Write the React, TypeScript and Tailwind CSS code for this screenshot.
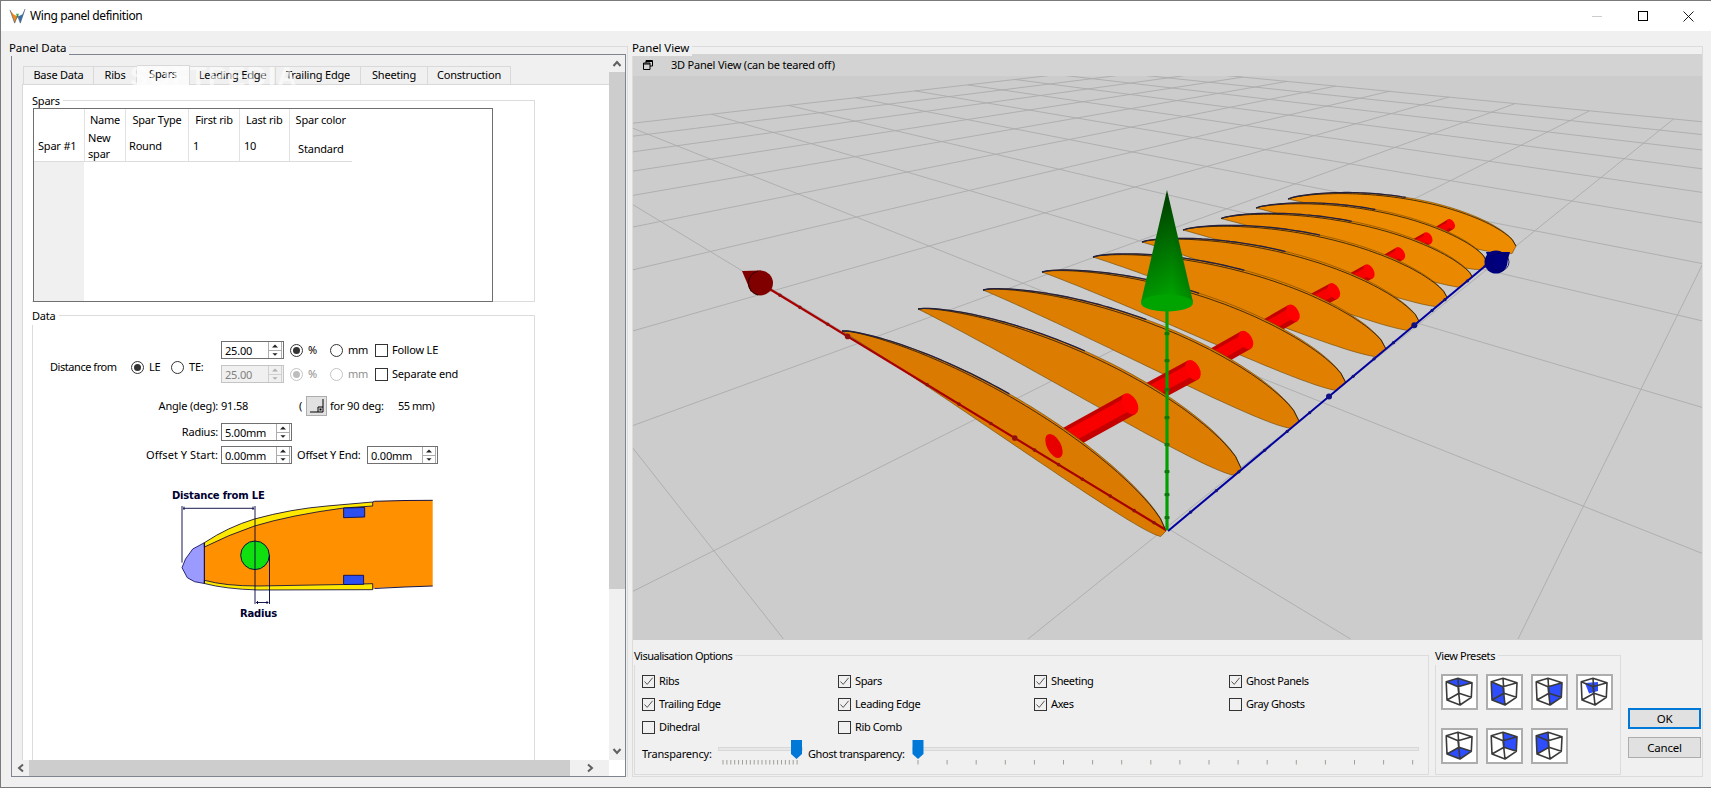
import React from "react";

const VA: [number, number] = [1840, -15];
const VB: [number, number] = [265, -18];
const aLine = (k: number): [number, number, number, number] => [VA[0], VA[1], 1028 - 490 * k, 639];
const bLine = (k: number): [number, number, number, number] => [VB[0], VB[1], 783.5 + 567 * (k - 1), 639];
function cross(p: number[], q: number[]): [number, number] {
  const [x1, y1, x2, y2] = p;
  const [x3, y3, x4, y4] = q;
  const d = (x1 - x2) * (y3 - y4) - (y1 - y2) * (x3 - x4);
  const a = x1 * y2 - y1 * x2;
  const b = x3 * y4 - y3 * x4;
  return [(a * (x3 - x4) - (x1 - x2) * b) / d, (a * (y3 - y4) - (y1 - y2) * b) / d];
}
const A_MAX = 10;
const B_MAX = 12;
const aKs = Array.from({ length: A_MAX + 2 }, (_, i) => i - 1);
const bKs = Array.from({ length: B_MAX }, (_, i) => i + 1);

const ribs: number[][] = [
  [842, 331, 1166, 531],
  [918, 309, 1241, 468],
  [983, 290, 1299, 421],
  [1042, 272, 1346, 383],
  [1093, 257, 1386, 349],
  [1142, 242, 1420, 323],
  [1183, 230, 1448, 299],
  [1221, 218.5, 1474, 280],
  [1256, 208, 1487, 262],
  [1288, 199, 1516, 246],
];
const caps: number[][] = [
  [1054, 446],
  [1130, 404],
  [1193, 370],
  [1246, 340],
  [1293, 313],
  [1334, 291],
  [1369, 271.5],
  [1400, 253.5],
  [1428, 238],
  [1451, 224],
];
const ts = Array.from({ length: 61 }, (_, i) => i / 60);
function ribData(r: number[], i: number) {
  const [tx, ty, ex, ey] = r;
  const dx = ex - tx;
  const dy = ey - ty;
  const s = Math.hypot(dx, dy) / 380;
  const sl = i === 0 ? 0.85 : s + (1 - s) * 0.4;
  const A = i === 0 ? 41 : 43;
  const up = (t: number) => -A * s * 2.67 * Math.pow(t, 0.85) * Math.pow(1 - t, 0.6);
  const lo = (t: number) => 30 * sl * Math.pow(t, 1.6) * Math.pow(1 - t, 0.25);
  const pt = (t: number, o: number) => `${(tx + t * dx).toFixed(1)},${(ty + t * dy + o).toFixed(1)}`;
  const upper = ts.map((t) => pt(t, up(t)));
  const inner = ts.map((t) => pt(t, up(t) * 0.94));
  const lower = ts.map((t) => pt(t, lo(t))).reverse();
  return {
    body: "M" + upper.concat(lower).join("L") + "Z",
    upper: "M" + upper.join("L"),
    inner: "M" + inner.join("L"),
    tip: "M" + upper.slice(0, 32).join("L"),
  };
}
function mix(i: number) {
  const f = i / 9;
  const g = Math.round(122 + f * 18);
  const r = Math.round(218 + f * 20);
  return `rgb(${r},${g},0)`;
}

function Scene() {
  const order = [9, 8, 7, 6, 5, 4, 3, 2, 1, 0];
  return (
    <svg viewBox="633 76 1069 564" width={1069} height={564} className="block">
      <defs>
        <linearGradient id="cone" x1="0" y1="0" x2="0" y2="1">
          <stop offset="0" stopColor="#003c00" />
          <stop offset="1" stopColor="#00a800" />
        </linearGradient>
        <linearGradient id="conex" x1="0" y1="0" x2="1" y2="0">
          <stop offset="0" stopColor="#000" stopOpacity="0.12" />
          <stop offset="0.6" stopColor="#000" stopOpacity="0" />
          <stop offset="1" stopColor="#000" stopOpacity="0.2" />
        </linearGradient>
        <clipPath id="aboveBlue">
          <polygon points="633,978 1702,85 1702,60 633,60" />
        </clipPath>
      </defs>
      <rect x="633" y="76" width="1069" height="564" fill="#cccccc" />
      {aKs.map((k) => {
        const l = aLine(k);
        const e = cross(l, bLine(B_MAX));
        return <line key={"a" + k} x1={e[0]} y1={e[1]} x2={l[2]} y2={l[3]} stroke="#acacac" strokeWidth="0.9" />;
      })}
      {bKs.map((k) => {
        const l = bLine(k);
        const e = cross(l, aLine(A_MAX));
        return <line key={"b" + k} x1={e[0]} y1={e[1]} x2={l[2]} y2={l[3]} stroke="#acacac" strokeWidth="0.9" />;
      })}
      {order.map((i) => {
        const d = ribData(ribs[i], i);
        const nearCap = caps[i];
        const next = i > 0 ? caps[i - 1] : null;
        const rad = 11.5 - ((i - 1) * 6) / 8;
        const ang = next ? (Math.atan2(next[1] - nearCap[1], next[0] - nearCap[0]) * 180) / Math.PI : 0;
        return (
          <g key={i}>
            <g clipPath={i > 0 && i < 9 ? "url(#aboveBlue)" : undefined}>
              <path d={d.body} fill={mix(i)} stroke="#6a4500" strokeWidth="0.6" />
              <path d={d.inner} fill="none" stroke="#1c1408" strokeWidth="0.8" />
              <path d={d.tip} fill="none" stroke="#232040" strokeWidth="1.3" />
            </g>
            {next && (
              <g>
                <line x1={nearCap[0]} y1={nearCap[1]} x2={next[0]} y2={next[1]} stroke="#c40000" strokeWidth={rad * 2} />
                <line x1={nearCap[0]} y1={nearCap[1] - rad * 0.1} x2={next[0]} y2={next[1] - rad * 0.1} stroke="#f80000" strokeWidth={rad * 1.15} />
                <ellipse
                  cx={nearCap[0]}
                  cy={nearCap[1]}
                  rx={rad * 0.62}
                  ry={rad}
                  transform={`rotate(${ang + 180} ${nearCap[0]} ${nearCap[1]})`}
                  fill="#ff0000"
                />
              </g>
            )}
            {!next && <ellipse cx="1054" cy="446" rx="7" ry="13" transform="rotate(-28 1054 446)" fill="#e80000" />}
          </g>
        );
      })}
      {/* red axis */}
      <line x1="1166" y1="530" x2="768" y2="288" stroke="#a80000" strokeWidth="2.2" />
      {[0.03, 0.08, 0.14, 0.21, 0.27, 0.33, 0.38, 0.44, 0.52, 0.6, 0.8, 0.85, 0.92, 0.97].map((f) => (
        <circle key={f} cx={1166 - 398 * f} cy={530 - 242 * f} r={f === 0.38 || f === 0.8 ? 2.8 : 1.8} fill="#901010" />
      ))}
      <polygon points="742,271 761,270.5 751,292" fill="#800000" />
      <circle cx="760.5" cy="283" r="12.5" fill="#800000" />
      <path d="M758 271 A12.3 12.3 0 0 0 758 295" fill="none" stroke="#220000" strokeWidth="0.9" />
      {/* blue axis */}
      <line x1="1168" y1="531" x2="1490" y2="262" stroke="#0000a0" strokeWidth="2" />
      {[0.07, 0.15, 0.22, 0.3, 0.37, 0.44, 0.5, 0.575, 0.64, 0.7, 0.765, 0.82, 0.86, 0.93, 0.985].map((f) => (
        <circle key={f} cx={1168 + 322 * f} cy={531 - 269 * f} r={f === 0.5 || f === 0.765 ? 3 : 1.6} fill="#101080" />
      ))}
      <polygon points="1486,252 1510,252 1506,266 1492,270" fill="#00007f" />
      <circle cx="1496" cy="262" r="11.5" fill="#00007f" />
      <circle cx="1500" cy="262" r="9" fill="none" stroke="#000050" strokeWidth="0.8" />
      {/* green axis */}
      <line x1="1167" y1="530" x2="1167" y2="305" stroke="#00a000" strokeWidth="3.2" />
      {[332, 359, 388, 416, 443, 470, 493, 516].map((y) => (
        <rect key={y} x="1164.5" y={y} width="5" height="3.2" rx="1" fill="#0a7a0a" />
      ))}
      <polygon points="1167,190 1141,302 1193,302" fill="url(#cone)" />
      <polygon points="1167,190 1141,302 1193,302" fill="url(#conex)" />
      <ellipse cx="1167" cy="303" rx="26" ry="8.5" fill="#00a400" />
    </svg>
  );
}

function Diagram() {
  return (
    <svg viewBox="165 485 275 135" width={275} height={135} className="block">
      <path d="M204.4,541.7 L192.7,548 L185.5,558 L182,566.7 L187.3,576.7 L194.5,580.7 L204.4,582.5 Z" fill="#9a9aff" stroke="#000050" strokeWidth="0.8" />
      <path d="M204.4,541.7 Q228,526 254.5,518 Q291,508 327,505 L372.7,501 L374.5,500.3 L405,499.3 L432.7,499.3 L432.7,585 L374.5,587 L372.7,588.7 L258,588 Q225,587 204.4,579.3 Z" fill="#ff9000" />
      <path d="M204.4,541.7 Q228,526 254.5,518 Q291,508 327,505 L372.7,501 L372.7,505 L343.6,507 Q291,514 254.5,525 Q228,534 204.4,546 Z" fill="#ffe800" stroke="#000040" strokeWidth="0.8" />
      <path d="M204.4,579.3 Q225,585 258,585 L343.6,583.5 L372.7,582.7 L372.7,588.7 L258,589 Q225,588 204.4,582.5 Z" fill="#ffe800" stroke="#000040" strokeWidth="0.8" />
      <path d="M372.7,501 L374.5,500.3 L405,499.5 L432.7,499.3 M432.7,585 L405,586 L374.5,587.5" fill="none" stroke="#000040" strokeWidth="0.9" />
      <path d="M204.4,541.7 L204.4,582.5" stroke="#000040" strokeWidth="0.9" />
      <path d="M343.6,507 L364.7,506.5 L364.7,516 L343.6,516.7 Z" fill="#2d4ff0" stroke="#000040" strokeWidth="0.8" />
      <path d="M343.6,574.3 L363.6,574.3 L363.6,583.3 L343.6,583.5 Z" fill="#2d4ff0" stroke="#000040" strokeWidth="0.8" />
      <circle cx="255" cy="554.3" r="14.3" fill="#10e010" stroke="#000040" strokeWidth="0.9" />
      <path d="M182,505 V561.6 M255,505 V603 M269.5,554 V603" stroke="#000040" strokeWidth="0.9" fill="none" />
      <path d="M183,507.3 H254 M184,505.6 V509 M253,505.6 V509 M256,601.5 H268.5 M257.5,600 V603 M267,600 V603" stroke="#000040" strokeWidth="0.9" fill="none" />
      <text x="172" y="498" fontFamily="'DejaVu Sans', sans-serif" fontWeight="700" fontSize="10" fill="#000030">Distance from LE</text>
      <text x="240" y="616" fontFamily="'DejaVu Sans', sans-serif" fontWeight="700" fontSize="10" fill="#000030">Radius</text>
    </svg>
  );
}

function Radio({ on, off, label, w }: { on?: boolean; off?: boolean; label: string; w: string }) {
  return (
    <div className={`flex items-center shrink-0 ${w} ${off ? "text-[#8f8f8f]" : ""}`}>
      <span className={`flex items-center justify-center w-[13px] h-[13px] rounded-full border shrink-0 ${off ? "border-[#c4c4c4]" : "border-[#333333]"}`}>
        {on && <span className={`block w-[7px] h-[7px] rounded-full ${off ? "bg-[#bdbdbd]" : "bg-[#333333]"}`} />}
      </span>
      <span className="ml-[5px]">{label}</span>
    </div>
  );
}

function Check({ on, label, className = "" }: { on?: boolean; label: string; className?: string }) {
  return (
    <div className={`flex items-center ${className}`}>
      <span className="flex items-center justify-center w-[13px] h-[13px] border border-[#333333] bg-transparent shrink-0">
        {on && (
          <svg viewBox="0 0 11 11" width={11} height={11}>
            <path d="M1.5 5.5 L4.2 8.4 L9.6 1.8" fill="none" stroke="#555555" strokeWidth="1" />
          </svg>
        )}
      </span>
      <span className="ml-[4px]">{label}</span>
    </div>
  );
}

function Spin({ value, w, off }: { value: string; w: string; off?: boolean }) {
  const a = off ? "#b0b0b0" : "#222222";
  return (
    <div className={`flex items-center shrink-0 h-[18px] ${w} border ${off ? "bg-[#f0f0f0] border-[#c4c4c4] text-[#7f7f7f]" : "bg-white border-[#707070]"}`}>
      <span className="flex-1 pl-[3px] leading-none">{value}</span>
      <span className={`flex flex-col w-[14px] h-[16px] mr-px border-l border-r ${off ? "border-[#d0d0d0]" : "border-[#adadad]"}`}>
        <svg viewBox="0 0 12 8" width={12} height={8} className="block">
          <path d="M3 5.5 H9 L6 2.5 Z" fill={a} />
        </svg>
        <svg viewBox="0 0 12 8" width={12} height={8} className={`block border-t ${off ? "border-[#d0d0d0]" : "border-[#adadad]"}`}>
          <path d="M3 2.5 H9 L6 5.5 Z" fill={a} />
        </svg>
      </span>
    </div>
  );
}

const topF = "5.2,7.7 17,4.3 31,8.7 17,12.7";
const leftF = "5.2,7.7 17,12.7 19,31 6,26";
const frontF = "17,12.7 31,8.7 30.3,23.3 19,31";
const backS = "9,9 22,8 22,17 13,19.5";
const botF = "6,26 19,31 30.3,23.3 18,19.3";
const backR = "17,4.3 31,8.7 30.3,23.3 18,19.3";
const backL = "5.2,7.7 17,4.3 18,19.3 6,26";

function Cube({ face }: { face: string }) {
  return (
    <span className="block w-[37px] h-[36px] border-2 border-[#adadad] bg-white shrink-0">
      <svg viewBox="2 2 33 32" width={33} height={32} className="block">
        <polygon points={face} fill="#2d4dff" />
        <path
          d="M5.2 7.7 L17 4.3 L31 8.7 L17 12.7 Z M6 26 L19 31 L30.3 23.3 L18 19.3 Z M5.2 7.7 L6 26 M17 12.7 L19 31 M31 8.7 L30.3 23.3 M17 4.3 L18 19.3"
          fill="none"
          stroke="#3a3a3a"
          strokeWidth="1.6"
          strokeLinejoin="round"
        />
      </svg>
    </span>
  );
}

function Slider({ w, thumb, start, step, count, trackFrom }: { w: number; thumb: number; start: number; step: number; count: number; trackFrom: number }) {
  const ticks = Array.from({ length: count }, (_, i) => start + i * step);
  return (
    <div className="relative shrink-0 h-[25px]" style={{ width: w }}>
      <div className="absolute top-[7px] right-0 h-[4px] bg-[#e7e7e7] border border-[#d8d8d8]" style={{ left: trackFrom }} />
      <svg viewBox={`0 0 ${w} 25`} width={w} height={25} className="absolute left-0 top-0">
        {ticks.map((x) => (
          <line key={x} x1={x} x2={x} y1="20" y2="24.5" stroke="#a09f94" strokeWidth="1" />
        ))}
        <polygon points={`${thumb - 5.5},0 ${thumb + 5.5},0 ${thumb + 5.5},14 ${thumb},19 ${thumb - 5.5},14`} fill="#0078d7" />
      </svg>
    </div>
  );
}

function Chev({ d }: { d: string }) {
  return (
    <svg viewBox="0 0 10 10" width={10} height={10} className="block">
      <path d={d} fill="none" stroke="#606060" strokeWidth="2" />
    </svg>
  );
}

const cols = [
  { w: "w-[41px]", h: "Name", cell: <div className="pl-[3px] leading-[16px] mt-[3px]">New<br />spar</div> },
  { w: "w-[63px]", h: "Spar Type", cell: <div className="pl-[3px] mt-[11px]">Round</div> },
  { w: "w-[51px]", h: "First rib", cell: <div className="pl-[4px] mt-[11px]">1</div> },
  { w: "w-[49.5px]", h: "Last rib", cell: <div className="pl-[4px] mt-[11px]">10</div> },
  { w: "w-[63.5px]", h: "Spar color", cell: <div className="text-center mt-[14px]">Standard</div> },
];

const tabs = [
  ["Base Data", "w-[71px]"],
  ["Ribs", "w-[43px]"],
  ["Spars", "w-[53px]"],
  ["Leading Edge", "w-[86px]"],
  ["Trailing Edge", "w-[85px]"],
  ["Sheeting", "w-[67px]"],
  ["Construction", "w-[83px]"],
];

export default function App() {
  return (
    <div className="w-[1711px] h-[788px] overflow-hidden bg-[#f0f0f0] border-t border-l border-b border-[#7a7a7a] text-black text-[11px] font-['Noto_Sans','Liberation_Sans',sans-serif] tracking-[-0.2px]">
      {/* title bar */}
      <div className="flex items-center h-[30px] bg-white">
        <svg viewBox="0 0 18 18" width={17} height={17} className="ml-[8px] shrink-0">
          <path d="M1 2 L6 16 L9 9 L5 7 Z" fill="#f08a1c" />
          <path d="M17 1 L12 16 L9.5 9 L14 7 Z" fill="#3a6ea8" />
          <path d="M7.5 6 L10.5 6 L9 11 Z" fill="#3aa84a" />
          <path d="M1 2 L6 16 M17 1 L12 16 M6 16 L9 8 L12 16" fill="none" stroke="#4a5a70" strokeWidth="0.7" />
        </svg>
        <span className="ml-[4px] text-[12px] tracking-[-0.4px]">Wing panel definition</span>
        <div className="ml-auto flex">
          <span className="flex items-center justify-center w-[46px] h-[30px]">
            <svg viewBox="0 0 10 10" width={10} height={10}><path d="M0 5.5 H10" stroke="#cccccc" /></svg>
          </span>
          <span className="flex items-center justify-center w-[46px] h-[30px]">
            <svg viewBox="0 0 10 10" width={10} height={10}><rect x="0.5" y="0.5" width="9" height="9" fill="none" stroke="#000" /></svg>
          </span>
          <span className="flex items-center justify-center w-[45px] h-[30px]">
            <svg viewBox="0 0 11 11" width={11} height={11}><path d="M0.5 0.5 L10.5 10.5 M10.5 0.5 L0.5 10.5" stroke="#000" strokeWidth="0.9" /></svg>
          </span>
        </div>
      </div>

      <div className="flex pl-[9px] pt-[15px]">
        {/* Panel data */}
        <div className="relative w-[618px] h-[731px] border-t border-r border-[#dcdcdc] pl-px pt-[7px]">
          <span className="absolute -left-px -top-[8px] pr-[3px] bg-[#f0f0f0] text-[11.5px] tracking-[-0.1px]">Panel Data</span>
          <div className="w-[615px] h-[723px] border border-[#7f8590] flex flex-col">
            <div className="flex h-[705px]">
              <div className="relative w-[597px] bg-[#f0f0f0] overflow-hidden pt-[11px]">
                <div className="flex items-end pl-[11px] h-[18px] relative z-10">
                  {tabs.map(([t, w], i) => (
                    <div
                      key={t}
                      className={`${w} flex items-center justify-center border-t border-r border-[#d9d9d9] ${i === 0 ? "border-l" : ""} ${i === 2 ? "h-[20px] bg-[#fafafa] -mb-px pb-[2px]" : "h-[18px] bg-[#f0f0f0]"}`}
                    >
                      {t}
                    </div>
                  ))}
                </div>
                <span className="absolute left-[118px] top-[2px] z-20 text-[27px] font-bold text-white/60 tracking-[1.5px] font-['Liberation_Sans',sans-serif]">SOFTPEDIA</span>
                <div className="ml-[10px] h-[677px] bg-white border-t border-l border-[#d9d9d9] pl-[9px] pt-[15px]">
                  <div className="relative w-[503px] h-[202px] border-t border-r border-b border-[#dcdcdc]">
                    <span className="absolute left-0 -top-[8px] pr-[3px] bg-white">Spars</span>
                    <div className="absolute left-px top-[7px] w-[460px] h-[194px] border border-[#6f6f6f] flex flex-col bg-white">
                      <div className="flex h-[53px] border-b border-[#dcdcdc] w-[318px]">
                        <div className="w-[50px] bg-white pl-[4px] pt-[29px] shrink-0">Spar #1</div>
                        {cols.map((c) => (
                          <div key={c.h} className={`${c.w} shrink-0 border-l border-[#e2e2e2]`}>
                            <div className="text-center h-[18px] leading-[22px]">{c.h}</div>
                            {c.cell}
                          </div>
                        ))}
                      </div>
                      <div className="w-[50px] flex-1 bg-[#f0f0f0]" />
                    </div>
                  </div>
                  <div className="relative w-[503px] h-[480px] mt-[13px] border-t border-l border-r border-[#dcdcdc]">
                    <span className="absolute -left-px -top-[8px] pr-[3px] bg-white">Data</span>
                    <div className="flex items-center mt-[25px]">
                      <div className="flex items-center mt-[10px] shrink-0">
                        <span className="w-[98px] pl-[17px] shrink-0 tracking-[-0.45px]">Distance from</span>
                        <Radio on label="LE" w="w-[40px]" />
                        <Radio label="TE:" w="w-[50px]" />
                      </div>
                      <div className="flex flex-col gap-[6px]">
                        <div className="flex items-center">
                          <Spin value="25.00" w="w-[63px]" />
                          <div className="w-[6px]" />
                          <Radio on label="%" w="w-[40px]" />
                          <Radio label="mm" w="w-[45px]" />
                          <Check label="Follow LE" />
                        </div>
                        <div className="flex items-center">
                          <Spin value="25.00" w="w-[63px]" off />
                          <div className="w-[6px]" />
                          <Radio on off label="%" w="w-[40px]" />
                          <Radio off label="mm" w="w-[45px]" />
                          <Check label="Separate end" />
                        </div>
                      </div>
                    </div>
                    <div className="flex items-center h-[20px] mt-[13px]">
                      <span className="w-[188px] text-right pr-[3px] shrink-0">Angle (deg):</span>
                      <span className="w-[78px] shrink-0">91.58</span>
                      <span className="w-[7px] shrink-0">(</span>
                      <span className="flex items-center justify-center w-[21px] h-[20px] bg-[#e1e1e1] border border-[#adadad] shrink-0">
                        <svg viewBox="0 0 16 16" width={16} height={16}>
                          <path d="M1 14 H14 V1 M14 9 L9 9 V14" fill="none" stroke="#000" strokeWidth="1" />
                          <rect x="10.5" y="10.5" width="2" height="2" fill="#000" />
                        </svg>
                      </span>
                      <span className="w-[71px] pl-[3px] shrink-0">for 90 deg:</span>
                      <span className="tracking-[-0.5px]">55 mm)</span>
                    </div>
                    <div className="flex items-center h-[18px] mt-[7px]">
                      <span className="w-[188px] text-right pr-[3px] shrink-0">Radius:</span>
                      <Spin value="5.00mm" w="w-[71px]" />
                    </div>
                    <div className="flex items-center h-[18px] mt-[5px]">
                      <span className="w-[188px] text-right pr-[3px] shrink-0 tracking-[0.05px]">Offset Y Start:</span>
                      <Spin value="0.00mm" w="w-[71px]" />
                      <span className="w-[75px] pl-[5px] shrink-0">Offset Y End:</span>
                      <Spin value="0.00mm" w="w-[71px]" />
                    </div>
                    <div className="ml-[132px] mt-[22px]">
                      <Diagram />
                    </div>
                  </div>
                </div>
              </div>
              {/* vertical scrollbar */}
              <div className="w-[16px] flex flex-col bg-[#f0f0f0]">
                <div className="h-[17px] flex items-center justify-center shrink-0"><Chev d="M1.5 7 L5 3 L8.5 7" /></div>
                <div className="h-[517px] bg-[#cdcdcd] shrink-0" />
                <div className="flex-1 flex items-end justify-center pb-[4px]"><Chev d="M1.5 3 L5 7 L8.5 3" /></div>
              </div>
            </div>
            <div className="flex h-[16px]">
              <div className="w-[597px] flex bg-[#f0f0f0]">
                <div className="w-[17px] flex items-center justify-center shrink-0"><Chev d="M7 1.5 L3 5 L7 8.5" /></div>
                <div className="w-[541px] bg-[#cdcdcd] shrink-0" />
                <div className="flex-1 flex items-center justify-center"><Chev d="M3 1.5 L7 5 L3 8.5" /></div>
              </div>
              <div className="w-[16px] bg-white" />
            </div>
          </div>
        </div>

        {/* Panel view */}
        <div className="relative ml-[4px] w-[1071px] h-[731px] border border-[#dcdcdc] pt-[7px]">
          <span className="absolute -left-px -top-[8px] pr-[3px] bg-[#f0f0f0] text-[11.5px] tracking-[-0.1px]">Panel View</span>
          <div className="flex items-center h-[22px] bg-[#d3d3d3]">
            <svg viewBox="0 0 10 10" width={10} height={10} className="ml-[10px] shrink-0">
              <path d="M3 3 V0.5 H9.5 V6 H7 M0.5 3 H7 V9.5 H0.5 Z M3 1.5 H9.5 M0.5 4 H7" fill="none" stroke="#000" strokeWidth="1" />
            </svg>
            <span className="ml-[18px]">3D Panel View (can be teared off)</span>
          </div>
          <Scene />
          <div className="flex pt-[15px] pl-px">
            <div className="relative w-[795px] h-[120px] border border-[#dcdcdc] pt-[17px] pl-[7px] tracking-[-0.4px]">
              <span className="absolute -left-px -top-[8px] pr-[3px] bg-[#f0f0f0] tracking-[-0.5px]">Visualisation Options</span>
              <div className="grid grid-cols-[196px_196px_195px_1fr] auto-rows-[23px] items-start">
                <Check on label="Ribs" />
                <Check on label="Spars" />
                <Check on label="Sheeting" />
                <Check on label="Ghost Panels" />
                <Check on label="Trailing Edge" />
                <Check on label="Leading Edge" />
                <Check on label="Axes" />
                <Check label="Gray Ghosts" />
                <Check label="Dihedral" />
                <Check label="Rib Comb" />
              </div>
              <div className="flex items-start mt-[-2px]">
                <span className="w-[76px] shrink-0 pt-[6px] tracking-[-0.2px] whitespace-nowrap">Transparency:</span>
                <Slider w={85} thumb={78.5} start={5} step={3.9} count={20} trackFrom={0} />
                <span className="w-[105px] pl-[5px] shrink-0 pt-[6px] whitespace-nowrap">Ghost transparency:</span>
                <Slider w={511} thumb={10} start={10} step={29.1} count={18} trackFrom={4} />
              </div>
            </div>
            <div className="relative ml-[6px] w-[186px] h-[120px] border border-[#dcdcdc] pl-[5px] pt-[18px]">
              <span className="absolute -left-px -top-[8px] pr-[3px] bg-[#f0f0f0] tracking-[-0.4px]">View Presets</span>
              <div className="grid grid-cols-[37px_37px_37px_37px] gap-x-[8px] gap-y-[18px]">
                <Cube face={topF} />
                <Cube face={leftF} />
                <Cube face={frontF} />
                <Cube face={backS} />
                <Cube face={botF} />
                <Cube face={backR} />
                <Cube face={backL} />
              </div>
            </div>
            <div className="ml-[7px] w-[73px] flex flex-col gap-[8px] pt-[53px]">
              <div className="h-[21px] bg-[#e1e1e1] border-2 border-[#0078d7] flex items-center justify-center text-[11.5px]">OK</div>
              <div className="h-[21px] bg-[#e1e1e1] border border-[#adadad] flex items-center justify-center text-[11.5px]">Cancel</div>
            </div>
          </div>
        </div>
      </div>
    </div>
  );
}
